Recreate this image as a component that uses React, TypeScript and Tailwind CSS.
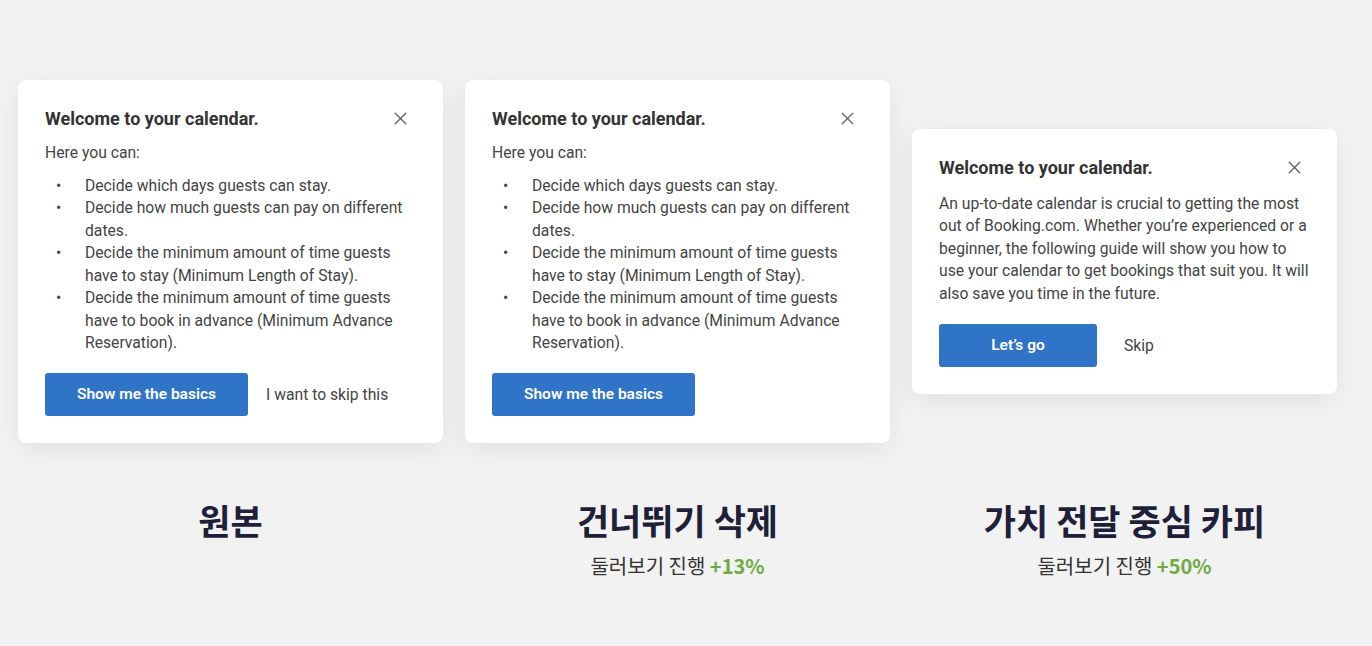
import { X } from "lucide-react";

const LIST = [
  "Decide which days guests can stay.",
  "Decide how much guests can pay on different dates.",
  "Decide the minimum amount of time guests have to stay (Minimum Length of Stay).",
  "Decide the minimum amount of time guests have to book in advance (Minimum Advance Reservation).",
] as const;

const VARIANTS = [
  { name: "원본", kind: "list", primary: "Show me the basics", secondary: "I want to skip this", lift: null },
  { name: "건너뛰기 삭제", kind: "list", primary: "Show me the basics", secondary: null, lift: "+13%" },
  { name: "가치 전달 중심 카피", kind: "copy", primary: "Let’s go", secondary: "Skip", lift: "+50%" },
] as const;

function Card({ variant }: { variant: (typeof VARIANTS)[number] }) {
  return (
    <div className="w-[425px] rounded-[8px] bg-white px-[27px] pt-[27px] pb-[27px] shadow-[0_6px_28px_rgba(0,0,0,0.07)]">
      <div className="flex items-center justify-between">
        <h3 className="text-[18px] font-bold leading-[24px] text-[#333]">Welcome to your calendar.</h3>
        <X className="mr-[5px] h-[21px] w-[21px] text-[#666]" strokeWidth={1.6} />
      </div>
      {variant.kind === "list" ? (
        <>
          <p className="mt-[11px] text-[15.7px] leading-[22.4px] text-[#444]">Here you can:</p>
          <ul className="mt-[11px]">
            {LIST.map((item) => (
              <li key={item} className="flex text-[15.7px] leading-[22.4px] text-[#444]">
                <span className="w-[40px] shrink-0 pl-[11px]">•</span>
                <span className="w-[330px]">{item}</span>
              </li>
            ))}
          </ul>
        </>
      ) : (
        <p className="mt-[13px] text-[15.7px] leading-[22.4px] text-[#444]">
          An up-to-date calendar is crucial to getting the most out of Booking.com. Whether you’re experienced or a beginner, the following guide will show you how to use your calendar to get bookings that suit you. It will also save you time in the future.
        </p>
      )}
      <div className="mt-[19px] flex items-center">
        <button
          className={`${variant.kind === "list" ? "w-[203px] h-[43px]" : "w-[158px] h-[43px]"} rounded-[3px] bg-[#3074c8] text-[15.5px] font-semibold text-white`}
        >
          {variant.primary}
        </button>
        {variant.secondary && (
          <span className={`${variant.kind === "list" ? "ml-[18px]" : "ml-[27px]"} text-[15.7px] text-[#444]`}>
            {variant.secondary}
          </span>
        )}
      </div>
    </div>
  );
}

export default function App() {
  return (
    <div
      className="h-[646px] w-full overflow-hidden bg-[#f2f2f2] pt-[80px] pl-[18px]"
      style={{ fontFamily: "Roboto, 'Noto Sans CJK KR', sans-serif" }}
    >
      <div className="flex gap-[22px]">
        {VARIANTS.map((v) => (
          <div key={v.name} className="flex w-[425px] flex-col items-center">
            <div className="flex h-[363px] items-center">
              <Card variant={v} />
            </div>
            <h2 className="mt-[54px] text-[35px] font-bold leading-[46px] text-[#1f1f3a] [font-family:'Noto_Sans_CJK_KR',sans-serif]">
              {v.name}
            </h2>
            {v.lift && (
              <p className="mt-[9px] text-[20px] leading-[28px] text-[#333] [font-family:'Noto_Sans_CJK_KR',sans-serif]">
                둘러보기 진행 <span className="font-semibold text-[#6fab3f]">{v.lift}</span>
              </p>
            )}
          </div>
        ))}
      </div>
    </div>
  );
}
